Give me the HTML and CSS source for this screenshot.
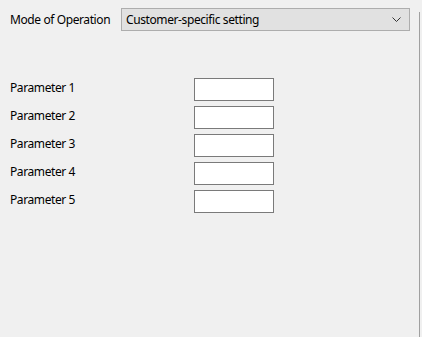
FILE: index.html
```html
<!DOCTYPE html>
<html lang="en">
<head>
    <meta charset="UTF-8">
    <meta name="viewport" content="width=device-width, initial-scale=1.0">
    <title>Mode of Operation</title>
    <link rel="stylesheet" href="styles.css">
</head>
<body>
    <div class="window">
        <div class="content">
            <!-- Mode selector row -->
            <div class="mode-row">
                <span class="mode-label">Mode of Operation</span>
                <div class="combo">
                    <span class="combo-text">Customer-specific setting</span>
                    <svg class="chevron" width="9" height="5" viewBox="0 0 9 5">
                        <polyline points="0.5,0.5 4.5,4.5 8.5,0.5" fill="none" stroke="#333" stroke-width="1"/>
                    </svg>
                </div>
            </div>

            <!-- Parameter inputs -->
            <div class="params">
                <label class="param-label">Parameter 1</label>
                <div class="param-box"></div>
                <label class="param-label">Parameter 2</label>
                <div class="param-box"></div>
                <label class="param-label">Parameter 3</label>
                <div class="param-box"></div>
                <label class="param-label">Parameter 4</label>
                <div class="param-box"></div>
                <label class="param-label">Parameter 5</label>
                <div class="param-box"></div>
            </div>
        </div>
        <div class="edge"></div>
    </div>
</body>
</html>
```

FILE: styles.css
```css
* {
    margin: 0;
    padding: 0;
    box-sizing: border-box;
}

body {
    font-family: "Noto Sans", "Open Sans", sans-serif;
    font-size: 12px;
    letter-spacing: -0.4px;
    color: #000;
    background-color: #f0f0f0;
}

.window {
    display: flex;
    height: 337px;
    width: 422px;
}

.content {
    width: 419px;
}

/* Right-hand divider line */
.edge {
    width: 1px;
    margin-top: 12px;
    background-color: #a0a0a0;
}

.mode-row {
    display: flex;
    align-items: center;
    padding: 8px 0 0 10px;
}

.mode-label {
    width: 111px;
}

.combo {
    display: flex;
    align-items: center;
    justify-content: space-between;
    width: 289px;
    height: 23px;
    padding: 0 4px 0 4px;
    background-color: #e1e1e1;
    border: 1px solid #adadad;
}

.chevron {
    margin-right: 4px;
}

.params {
    display: grid;
    grid-template-columns: 184px 80px;
    row-gap: 5px;
    padding: 47px 0 0 10px;
}

.param-label {
    padding-top: 1px;
    line-height: 18px;
}

.param-box {
    height: 23px;
    background-color: #fff;
    border: 1px solid #7a7a7a;
}
```
